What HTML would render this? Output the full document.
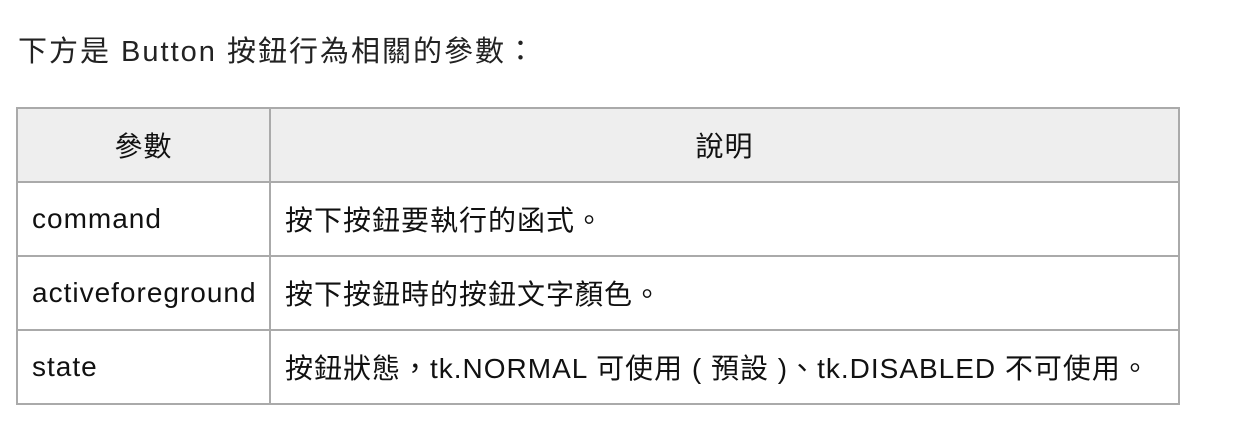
<!DOCTYPE html>
<html><head><meta charset="utf-8"><style>
body{margin:0;width:1258px;height:436px;background:#fff;font-family:"Liberation Sans","Noto Sans CJK TC",sans-serif;color:#111;font-size:28px;letter-spacing:1px}
.t{position:absolute;left:18px;top:28px;white-space:nowrap;color:#222;font-size:29px;letter-spacing:2px}
table{position:absolute;left:16px;top:107px;border-collapse:collapse;width:1164px;table-layout:fixed}
td,th{border:2px solid #aaa;height:72px;padding:0 14px;font-weight:normal;white-space:nowrap;overflow:visible}
th{background:#eee;text-align:center}
col.a{width:253px}
</style></head><body>
<div class="t">下方是 Button 按鈕行為相關的參數：</div>
<table>
<colgroup><col class="a"><col></colgroup>
<tr><th>參數</th><th>說明</th></tr>
<tr><td>command</td><td>按下按鈕要執行的函式。</td></tr>
<tr><td style="padding-right:0">activeforeground</td><td>按下按鈕時的按鈕文字顏色。</td></tr>
<tr><td>state</td><td>按鈕狀態，tk.NORMAL 可使用 ( 預設 )、tk.DISABLED 不可使用。</td></tr>
</table>
</body></html>
